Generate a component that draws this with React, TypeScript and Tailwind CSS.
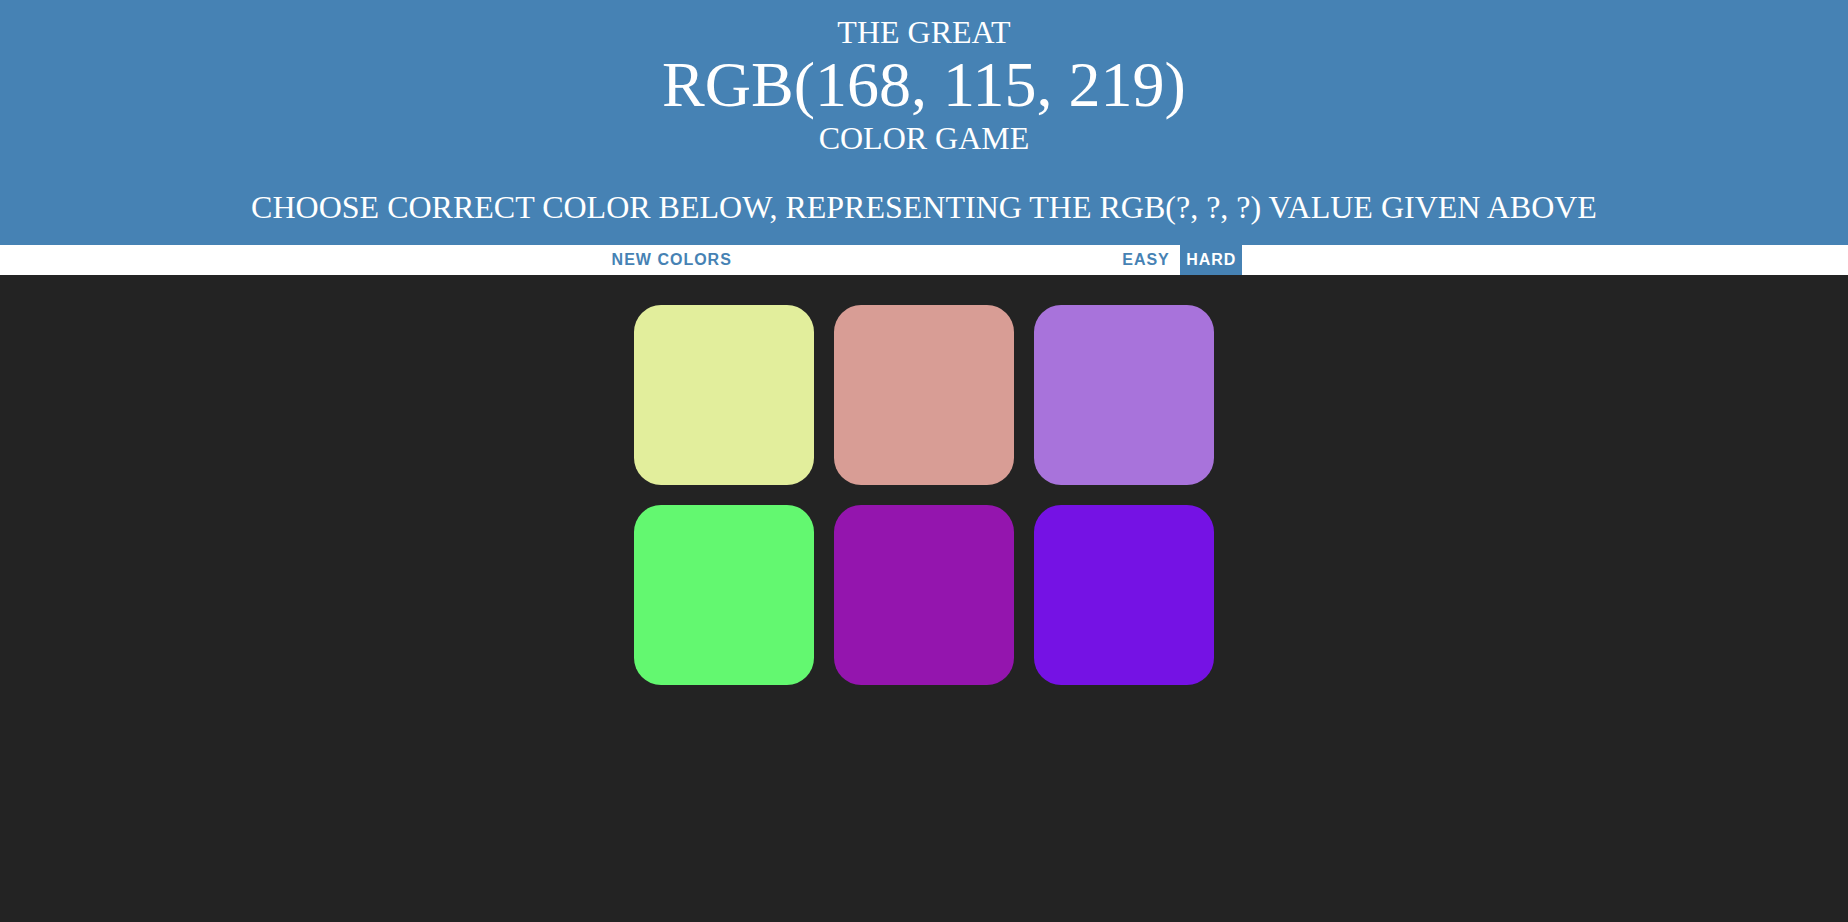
import React from "react";

const colors = ["#e2ee9c", "#d89d95", "#a873db", "#63f870", "#9415ae", "#7512e4"];

export default function App() {
  return (
    <div className="min-h-[922px] bg-[#232323]">
      <div className="bg-[#4682b4] pt-[15px] pb-[20px] text-center text-white uppercase font-['Liberation_Serif','Times_New_Roman',serif] font-normal">
        <h1 className="leading-[1.1]">
          <span className="block text-[32px]">The Great</span>
          <span className="block text-[64px]">RGB(168, 115, 219)</span>
          <span className="block text-[32px]">Color Game</span>
        </h1>
        <h2 className="mt-[34px] text-[32px] leading-[1.1]">
          Choose correct color below, representing the RGB(?, ?, ?) value given above
        </h2>
      </div>
      <div className="flex h-[30px] justify-center gap-[4.4px] bg-white font-['Liberation_Sans',Arial,sans-serif] text-[16px] font-bold uppercase tracking-[1px]">
        <button className="h-full px-[6px] text-[#4682b4] uppercase">New Colors</button>
        <span className="w-[20%]"></span>
        <button className="h-full px-[6px] text-[#4682b4] uppercase">Easy</button>
        <button className="h-full px-[6px] bg-[#4682b4] text-white uppercase">Hard</button>
      </div>
      <div className="mx-auto mt-[20px] grid w-[600px] grid-cols-3 gap-[20px] p-[10px]">
        {colors.map((c, i) => (
          <div
            key={i}
            className="h-[180px] w-[180px] rounded-[15%]"
            style={{ backgroundColor: c }}
          />
        ))}
      </div>
    </div>
  );
}
